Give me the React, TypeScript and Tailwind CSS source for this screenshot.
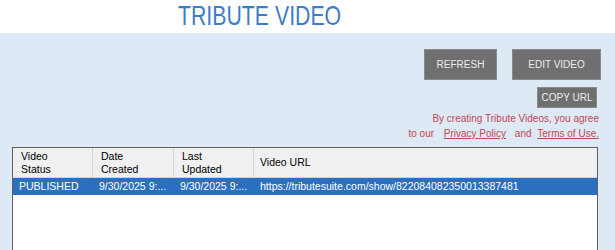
const rows = [
  {
    status: 'PUBLISHED',
    created: '9/30/2025 9:...',
    updated: '9/30/2025 9:...',
    url: 'https://tributesuite.com/show/822084082350013387481',
  },
];

const sans = { fontFamily: '"Liberation Sans", Arial, sans-serif' };

export default function App() {
  return (
    <div className="w-[615px] h-[250px] overflow-hidden bg-[#dde9f5] flex flex-col" style={sans}>
      <div className="h-[33px] bg-white flex items-start pt-[3px] pl-[178px]">
        <h1 className="text-[28px] leading-[26px] text-[#3d7cc9] font-normal whitespace-nowrap origin-left scale-x-[0.76]">
          TRIBUTE VIDEO
        </h1>
      </div>

      <div className="flex flex-col items-end pr-[14px] pt-[16px]">
        <div className="flex gap-[15px]">
          <button className="w-[73px] h-[31px] bg-[#6f6f6f] text-[#ececec] text-[10px] border border-[#8a8a8a]">
            REFRESH
          </button>
          <button className="w-[89px] h-[31px] bg-[#6f6f6f] text-[#ececec] text-[10px] border border-[#8a8a8a]">
            EDIT VIDEO
          </button>
        </div>
        <button className="mt-[7px] mr-[4px] w-[60px] h-[21px] bg-[#6f6f6f] text-[#ececec] text-[10px] border border-[#8a8a8a]">
          COPY URL
        </button>
        <div className="mt-[3px] mr-[2px] text-right text-[10px] leading-[15px] text-[#c2474f]">
          <p>By creating Tribute Videos, you agree</p>
          <p>
            to our <a className="underline ml-[7px] mr-[6px]">Privacy Policy</a> and{' '}
            <a className="underline ml-[3px]">Terms of Use.</a>
          </p>
        </div>
      </div>

      <div className="ml-[12px] mt-[6px] w-[586px] flex-1 bg-white border border-[#5f5f5f] border-b-0">
        <div className="flex h-[30px] bg-[#f0f0f0] border-b border-[#d4d4d4] text-[10.5px] leading-[13px] text-black">
          <div className="w-[80px] px-[8px] flex items-center border-r border-[#d4d4d4]">Video<br />Status</div>
          <div className="w-[81px] px-[8px] flex items-center border-r border-[#d4d4d4]">Date<br />Created</div>
          <div className="w-[80px] px-[8px] flex items-center border-r border-[#d4d4d4]">Last<br />Updated</div>
          <div className="flex-1 px-[6px] flex items-center">Video URL</div>
        </div>
        {rows.map((r) => (
          <div key={r.url} className="flex h-[17px] bg-[#2b6fc0] text-white text-[10.5px] leading-[17px]">
            <div className="w-[80px] px-[6px] whitespace-nowrap">{r.status}</div>
            <div className="w-[81px] px-[6px] whitespace-nowrap">{r.created}</div>
            <div className="w-[80px] px-[6px] whitespace-nowrap">{r.updated}</div>
            <div className="flex-1 px-[6px] whitespace-nowrap">{r.url}</div>
          </div>
        ))}
      </div>
    </div>
  );
}
